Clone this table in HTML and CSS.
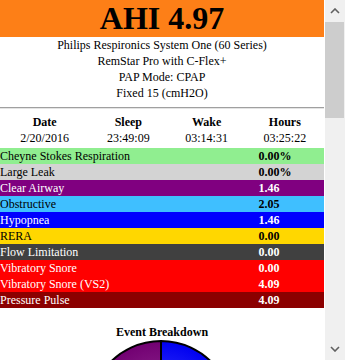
FILE: index.html
```html
<!DOCTYPE html>
<html lang="en">
<head>
<meta charset="utf-8">
<title>Sleep Report</title>
<link rel="stylesheet" href="styles.css">
</head>
<body>
<div class="viewport">
  <main class="page">
    <h1 class="ahi">AHI 4.97</h1>
    <div class="machine">
      <div>Philips Respironics System One (60 Series)</div>
      <div>RemStar Pro with C-Flex+</div>
      <div>PAP Mode: CPAP</div>
      <div>Fixed 15 (cmH2O)</div>
    </div>
    <hr class="rule">
    <table class="session">
      <thead>
        <tr><th>Date</th><th>Sleep</th><th>Wake</th><th>Hours</th></tr>
      </thead>
      <tbody>
        <tr><td>2/20/2016</td><td>23:49:09</td><td>03:14:31</td><td>03:25:22</td></tr>
      </tbody>
    </table>
    <table class="events">
      <tr class="ev-csr"><td>Cheyne Stokes Respiration</td><td class="val">0.00%</td></tr>
      <tr class="ev-leak"><td>Large Leak</td><td class="val">0.00%</td></tr>
      <tr class="ev-ca"><td>Clear Airway</td><td class="val">1.46</td></tr>
      <tr class="ev-obs"><td>Obstructive</td><td class="val">2.05</td></tr>
      <tr class="ev-hyp"><td>Hypopnea</td><td class="val">1.46</td></tr>
      <tr class="ev-rera"><td>RERA</td><td class="val">0.00</td></tr>
      <tr class="ev-fl"><td>Flow Limitation</td><td class="val">0.00</td></tr>
      <tr class="ev-vs"><td>Vibratory Snore</td><td class="val">0.00</td></tr>
      <tr class="ev-vs"><td>Vibratory Snore (VS2)</td><td class="val">4.09</td></tr>
      <tr class="ev-pp"><td>Pressure Pulse</td><td class="val">4.09</td></tr>
    </table>
    <section class="breakdown">
      <div class="chart-title">Event Breakdown</div>
      <svg class="pie" width="324" height="150" viewBox="0 0 324 150">
        <defs>
          <radialGradient id="g-hyp" cx="161" cy="72" r="71" gradientUnits="userSpaceOnUse">
            <stop offset="0" stop-color="#4d4dff"/>
            <stop offset="1" stop-color="#0000f0"/>
          </radialGradient>
          <radialGradient id="g-ca" cx="161" cy="72" r="71" gradientUnits="userSpaceOnUse">
            <stop offset="0" stop-color="#9a3a9a"/>
            <stop offset="1" stop-color="#720072"/>
          </radialGradient>
          <radialGradient id="g-obs" cx="161" cy="72" r="71" gradientUnits="userSpaceOnUse">
            <stop offset="0" stop-color="#7fd6ff"/>
            <stop offset="1" stop-color="#3fbfff"/>
          </radialGradient>
        </defs>
        <g stroke="#000" stroke-width="2" stroke-linejoin="round">
          <path d="M161,72 L161,1 A71,71 0 0,1 229.35,91.21 Z" fill="url(#g-hyp)"/>
          <path d="M161,72 L229.35,91.21 A71,71 0 0,1 92.65,91.21 Z" fill="url(#g-obs)"/>
          <path d="M161,72 L92.65,91.21 A71,71 0 0,1 161,1 Z" fill="url(#g-ca)"/>
        </g>
      </svg>
    </section>
  </main>
  <div class="scrollbar" aria-hidden="true">
    <div class="sb-btn">
      <svg width="10" height="6" viewBox="0 0 10 6"><path d="M1,5 L5,1 L9,5" fill="none" stroke="#606060" stroke-width="1.6"/></svg>
    </div>
    <div class="sb-thumb"></div>
    <div class="sb-track"></div>
    <div class="sb-btn">
      <svg width="10" height="6" viewBox="0 0 10 6"><path d="M1,1 L5,5 L9,1" fill="none" stroke="#606060" stroke-width="1.6"/></svg>
    </div>
  </div>
</div>
</body>
</html>
```

FILE: styles.css
```css
html, body {
  margin: 0;
  padding: 0;
  background: #fff;
}

body {
  font-family: "Liberation Serif", "Times New Roman", serif;
  font-size: 12px;
  line-height: 16px;
  color: #000;
}

.viewport {
  display: flex;
  justify-content: space-between;
  height: 360px;
  overflow: hidden;
}

.page {
  width: 324px;
  flex: none;
}

.ahi {
  margin: 0;
  background: #fd7f17;
  font-size: 32px;
  line-height: 37px;
  font-weight: bold;
  text-align: center;
}

.machine {
  text-align: center;
}

.rule {
  margin: 6px 0 5px;
  height: 0;
  border: 0;
  border-top: 1px solid #a0a0a0;
  border-bottom: 1px solid #e4e4e4;
}

.session,
.events {
  width: 100%;
  border-collapse: collapse;
  border-spacing: 0;
}

.session th,
.session td {
  padding: 0;
  text-align: center;
  line-height: 16px;
}

.session th {
  font-weight: bold;
}

.session {
  margin-bottom: 2px;
}

.events td {
  padding: 0;
  line-height: 16px;
  text-align: left;
  white-space: nowrap;
}

.events .val {
  font-weight: bold;
}

.ev-csr  { background: #90ee90; color: #000; }
.ev-leak { background: #d3d3d3; color: #000; }
.ev-ca   { background: #800080; color: #fff; }
.ev-obs  { background: #3fbfff; color: #000; }
.ev-hyp  { background: #0000ff; color: #fff; }
.ev-rera { background: #ffd700; color: #000; }
.ev-fl   { background: #404040; color: #fff; }
.ev-vs   { background: #ff0000; color: #fff; }
.ev-pp   { background: #8b0000; color: #fff; }

.breakdown {
  margin-top: 16px;
  text-align: center;
}

.chart-title {
  font-weight: bold;
  line-height: 16px;
}

.pie {
  display: block;
}

.scrollbar {
  width: 20px;
  flex: none;
  display: flex;
  flex-direction: column;
  background: #f0f0f0;
}

.sb-btn {
  height: 22px;
  flex: none;
  display: flex;
  align-items: center;
  justify-content: center;
}

.sb-thumb {
  height: 96px;
  flex: none;
  margin-right: 1px;
  background: #cdcdcd;
}

.sb-track {
  flex: 1;
}
```
